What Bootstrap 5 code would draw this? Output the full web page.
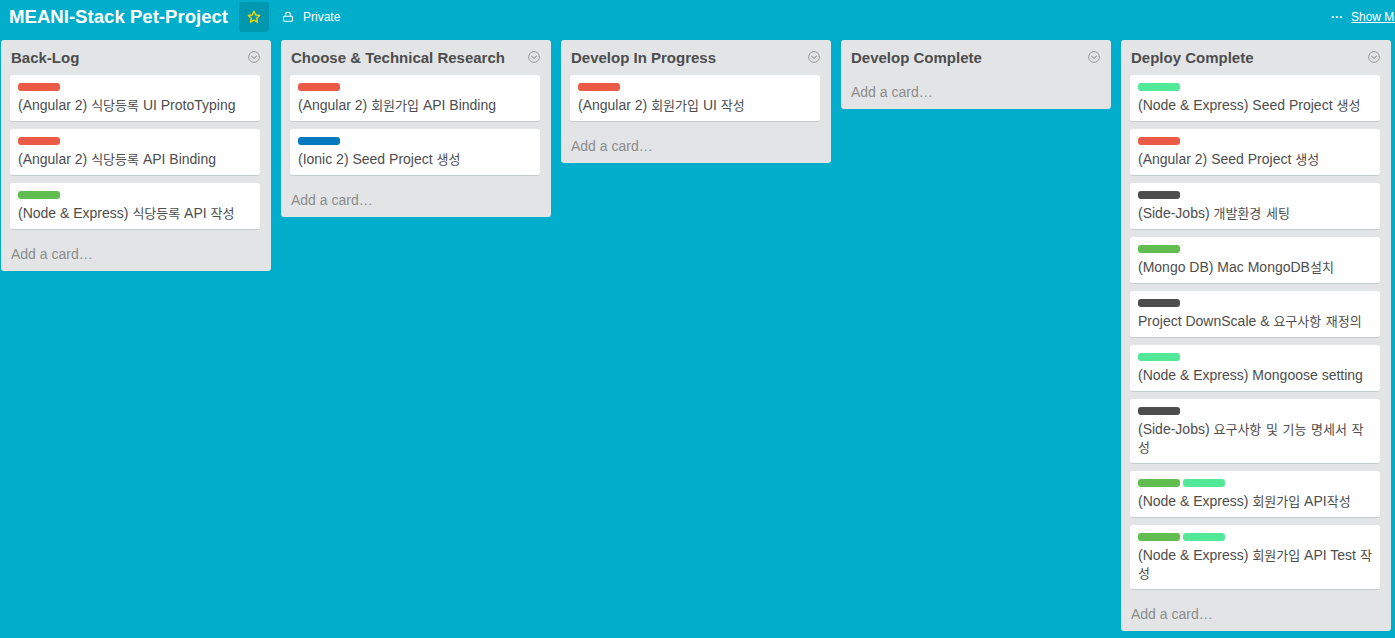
<!DOCTYPE html>
<html lang="ko">
<head>
    <meta charset="UTF-8">
    <title>MEANI-Stack Pet-Project</title>
    <meta name="viewport" content="width=device-width, initial-scale=1">
    <link href="https://cdn.jsdelivr.net/npm/bootstrap@5.3.3/dist/css/bootstrap.min.css" rel="stylesheet">
    <script src="https://cdn.jsdelivr.net/npm/bootstrap@5.3.3/dist/js/bootstrap.bundle.min.js"></script>
    <style>
        html, body {
            height: 100%;
            overflow: hidden;
        }

        body {
            background-color: #00aecc;
            font-family: "Liberation Sans", "Noto Sans CJK KR", sans-serif;
            font-size: 14px;
            line-height: 18px;
            color: #4d4d4d;
            width: 1395px;
        }

        .board-top {
            height: 30px;
            margin: 2px 0 8px;
            padding-left: 9px;
            white-space: nowrap;
            color: #fff;
        }

        .board-title {
            font-size: 18.6px;
            font-weight: 700;
            line-height: 30px;
            margin: 0;
            width: 230px;
        }

        .star-box {
            width: 30px;
            height: 30px;
            border-radius: 3px;
            background: #0097b1;
        }

        .private-tag {
            font-size: 12px;
            margin-left: 13px;
            gap: 9px;
        }

        .menu-tag {
            font-size: 12px;
            margin-left: auto;
            width: 64px;
            flex: none;
            gap: 8px;
            overflow: hidden;
        }

        .menu-dots {
            font-weight: 700;
        }

        .menu-tag a {
            color: #fff;
        }

        .lists-row {
            padding-left: 1px;
            gap: 10px;
            align-items: flex-start;
        }

        .list-box {
            width: 270px;
            flex: none;
            background: #e2e4e6;
            border-radius: 3px;
            padding: 0 11px 0 9px;
        }

        .list-head {
            height: 35px;
            padding: 9px 0 0 1px;
        }

        .list-head h2 {
            font-size: 15px;
            font-weight: 700;
            line-height: 18px;
            margin: 0;
        }

        .list-head svg {
            margin-top: 2px;
        }

        .task-card {
            background: #fff;
            border-radius: 3px;
            border-bottom: 1px solid #c4c9cc;
            padding: 8px 8px 7px;
            margin-bottom: 7px;
        }

        .task-labels {
            gap: 3px;
            height: 8px;
            margin-bottom: 5px;
        }

        .task-label {
            width: 42px;
            height: 8px;
            border-radius: 3px;
        }

        .lb-red { background: #eb5a46; }
        .lb-green { background: #61bd4f; }
        .lb-mint { background: #51e898; }
        .lb-blue { background: #0079bf; }
        .lb-dark { background: #4d4d4d; }

        /* hangul runs narrower than latin in the original */
        .ko {
            font-size: 13px;
            line-height: 14px;
            word-spacing: 1px;
        }

        .add-card {
            color: #8c8c8c;
            height: 34px;
            padding: 8px 0 0 1px;
        }
    </style>
</head>
<body>

<div class="board-top d-flex align-items-center">
    <h1 class="board-title">MEANI-Stack Pet-Project</h1>
    <div class="star-box d-flex align-items-center justify-content-center">
        <svg width="14" height="14" viewBox="0 0 14 14"><path d="M7 1.3l1.7 3.7 4 .5-3 2.7.8 4L7 10.2l-3.5 2 .8-4-3-2.7 4-.5z" fill="none" stroke="#f2d600" stroke-width="1.4" stroke-linejoin="round"/></svg>
    </div>
    <div class="private-tag d-flex align-items-center">
        <svg width="12" height="12" viewBox="0 0 12 12"><path d="M3.5 5V3.8a2.5 2.5 0 0 1 5 0V5" fill="none" stroke="#fff" stroke-width="1.1"/><rect x="1.5" y="5.2" width="9" height="5" rx="1" fill="none" stroke="#fff" stroke-width="1.1"/></svg>
        <span>Private</span>
    </div>
    <div class="menu-tag d-flex align-items-center">
        <span class="menu-dots">···</span>
        <a href="#">Show Menu</a>
    </div>
</div>

<div class="lists-row d-flex">
    <div class="list-box">
        <div class="list-head d-flex justify-content-between">
            <h2>Back-Log</h2>
            <svg width="12" height="12" viewBox="0 0 12 12"><circle cx="6" cy="6" r="5.4" fill="none" stroke="#999" stroke-width="1"/><path d="M3.3 4.9L6 7.5l2.7-2.6" fill="none" stroke="#999" stroke-width="1.1"/></svg>
        </div>
        <div class="task-card"><div class="task-labels d-flex"><span class="task-label lb-red"></span></div>(Angular 2) <span class="ko">식당등록</span> UI ProtoTyping</div>
        <div class="task-card"><div class="task-labels d-flex"><span class="task-label lb-red"></span></div>(Angular 2) <span class="ko">식당등록</span> API Binding</div>
        <div class="task-card"><div class="task-labels d-flex"><span class="task-label lb-green"></span></div>(Node &amp; Express) <span class="ko">식당등록</span> API <span class="ko">작성</span></div>
        <div class="add-card">Add a card…</div>
    </div>

    <div class="list-box">
        <div class="list-head d-flex justify-content-between">
            <h2>Choose &amp; Technical Research</h2>
            <svg width="12" height="12" viewBox="0 0 12 12"><circle cx="6" cy="6" r="5.4" fill="none" stroke="#999" stroke-width="1"/><path d="M3.3 4.9L6 7.5l2.7-2.6" fill="none" stroke="#999" stroke-width="1.1"/></svg>
        </div>
        <div class="task-card"><div class="task-labels d-flex"><span class="task-label lb-red"></span></div>(Angular 2) <span class="ko">회원가입</span> API Binding</div>
        <div class="task-card"><div class="task-labels d-flex"><span class="task-label lb-blue"></span></div>(Ionic 2) Seed Project <span class="ko">생성</span></div>
        <div class="add-card">Add a card…</div>
    </div>

    <div class="list-box">
        <div class="list-head d-flex justify-content-between">
            <h2>Develop In Progress</h2>
            <svg width="12" height="12" viewBox="0 0 12 12"><circle cx="6" cy="6" r="5.4" fill="none" stroke="#999" stroke-width="1"/><path d="M3.3 4.9L6 7.5l2.7-2.6" fill="none" stroke="#999" stroke-width="1.1"/></svg>
        </div>
        <div class="task-card"><div class="task-labels d-flex"><span class="task-label lb-red"></span></div>(Angular 2) <span class="ko">회원가입</span> UI <span class="ko">작성</span></div>
        <div class="add-card">Add a card…</div>
    </div>

    <div class="list-box">
        <div class="list-head d-flex justify-content-between">
            <h2>Develop Complete</h2>
            <svg width="12" height="12" viewBox="0 0 12 12"><circle cx="6" cy="6" r="5.4" fill="none" stroke="#999" stroke-width="1"/><path d="M3.3 4.9L6 7.5l2.7-2.6" fill="none" stroke="#999" stroke-width="1.1"/></svg>
        </div>
        <div class="add-card">Add a card…</div>
    </div>

    <div class="list-box">
        <div class="list-head d-flex justify-content-between">
            <h2>Deploy Complete</h2>
            <svg width="12" height="12" viewBox="0 0 12 12"><circle cx="6" cy="6" r="5.4" fill="none" stroke="#999" stroke-width="1"/><path d="M3.3 4.9L6 7.5l2.7-2.6" fill="none" stroke="#999" stroke-width="1.1"/></svg>
        </div>
        <div class="task-card"><div class="task-labels d-flex"><span class="task-label lb-mint"></span></div>(Node &amp; Express) Seed Project <span class="ko">생성</span></div>
        <div class="task-card"><div class="task-labels d-flex"><span class="task-label lb-red"></span></div>(Angular 2) Seed Project <span class="ko">생성</span></div>
        <div class="task-card"><div class="task-labels d-flex"><span class="task-label lb-dark"></span></div>(Side-Jobs) <span class="ko">개발환경 세팅</span></div>
        <div class="task-card"><div class="task-labels d-flex"><span class="task-label lb-green"></span></div>(Mongo DB) Mac MongoDB<span class="ko">설치</span></div>
        <div class="task-card"><div class="task-labels d-flex"><span class="task-label lb-dark"></span></div>Project DownScale &amp; <span class="ko">요구사항 재정의</span></div>
        <div class="task-card"><div class="task-labels d-flex"><span class="task-label lb-mint"></span></div>(Node &amp; Express) Mongoose setting</div>
        <div class="task-card"><div class="task-labels d-flex"><span class="task-label lb-dark"></span></div>(Side-Jobs) <span class="ko">요구사항 및 기능 명세서 작성</span></div>
        <div class="task-card"><div class="task-labels d-flex"><span class="task-label lb-green"></span><span class="task-label lb-mint"></span></div>(Node &amp; Express) <span class="ko">회원가입</span> API<span class="ko">작성</span></div>
        <div class="task-card"><div class="task-labels d-flex"><span class="task-label lb-green"></span><span class="task-label lb-mint"></span></div>(Node &amp; Express) <span class="ko">회원가입</span> API Test <span class="ko">작성</span></div>
        <div class="add-card">Add a card…</div>
    </div>
</div>

</body>
</html>
